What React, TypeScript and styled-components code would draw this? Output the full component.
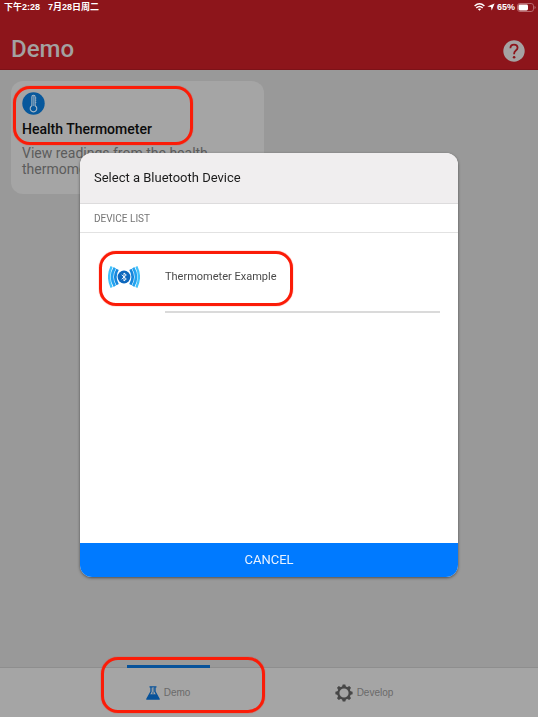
import React from "react";
import styled, { createGlobalStyle } from "styled-components";

const GlobalStyle = createGlobalStyle`
  *, *::before, *::after { box-sizing: border-box; }
  body {
    margin: 0;
    background: #999999;
    font-family: Roboto, "Noto Sans CJK SC", sans-serif;
  }
  button { font: inherit; border: 0; padding: 0; background: none; cursor: pointer; }
  h1, h2, h3, p, ul { margin: 0; padding: 0; }
  svg { display: block; flex: none; }
`;

const Page = styled.div`
  display: flex;
  flex-direction: column;
  min-height: 100vh;
`;

const Header = styled.header`
  display: flex;
  flex-direction: column;
  background: #8d151b;
  border-bottom: 1px solid #7d1218;
`;

const StatusBar = styled.div`
  display: flex;
  justify-content: space-between;
  height: 14px;
  padding: 0 2px 0 4px;
  color: #ffffff;
  font: 700 9px/14px "Liberation Sans", "Noto Sans CJK SC", sans-serif;
`;

const StatusGroup = styled.div<{ $gap: number }>`
  display: flex;
  align-items: center;
  gap: ${(p) => p.$gap}px;
`;

const TitleRow = styled.div`
  display: flex;
  align-items: center;
  justify-content: space-between;
  height: 55px;
  padding: 14px 13px 0 11px;
`;

const Title = styled.h1`
  color: #a3a1a1;
  font-size: 24px;
  font-weight: 500;
  line-height: 28px;
`;

const HelpButton = styled.button`
  margin-top: 4px;
`;

const Content = styled.main`
  flex: 1;
  padding: 11px;
`;

const Card = styled.section`
  position: relative;
  width: 49%;
  min-width: 252px;
  padding: 11px;
  border-radius: 12px;
  background: #a5a5a5;
`;

const CardTitle = styled.h2`
  margin-top: 5px;
  color: #0b0b0b;
  font-size: 14px;
  font-weight: 500;
  line-height: 18px;
`;

const CardText = styled.p`
  margin-top: 7px;
  padding-bottom: 6px;
  color: #5c5c5c;
  font-size: 14px;
  line-height: 16px;
`;

const Highlight = styled.span<{ $inset: string }>`
  position: absolute;
  inset: ${(p) => p.$inset};
  border: 3px solid #fb1c08;
  border-radius: 17px;
  box-shadow: 0 0 1px #fb1c08;
  pointer-events: none;
`;

const TabBar = styled.nav`
  display: flex;
  height: 50px;
  padding: 0 76px 0 70px;
  background: #a5a5a5;
  border-top: 1px solid #8e8e8e;
`;

const Tab = styled.button<{ $active?: boolean }>`
  position: relative;
  display: flex;
  flex: 1;
  align-items: center;
  justify-content: center;
  gap: 4px;
  color: #6a6a6a;
  font-family: "Liberation Sans", sans-serif;
  font-size: 10px;
  line-height: 12px;

  &::before {
    content: "";
    position: absolute;
    top: -3px;
    left: calc(50% - 41px);
    width: 83px;
    height: 3px;
    background: ${(p) => (p.$active ? "#07529a" : "transparent")};
  }
`;

const Backdrop = styled.div`
  position: fixed;
  inset: 0;
  display: flex;
  align-items: center;
  justify-content: center;
  padding: 13px 80px 0;
`;

const Dialog = styled.div`
  display: flex;
  flex-direction: column;
  width: 100%;
  height: 60%;
  min-height: 424px;
  overflow: hidden;
  border-radius: 12px;
  background: #ffffff;
  box-shadow: 0 1px 3px rgba(0, 0, 0, 0.5);
`;

const DialogTitle = styled.h2`
  padding: 16px 14px;
  border-bottom: 1px solid #dddcdd;
  background: #f0eeef;
  color: #1c1c1c;
  font-size: 13px;
  font-weight: 400;
  line-height: 18px;
`;

const ListHeading = styled.h3`
  padding: 7px 14px 5px;
  border-bottom: 1px solid #e2e2e2;
  color: #757575;
  font-size: 10px;
  font-weight: 400;
  line-height: 16px;
`;

const DeviceList = styled.ul`
  flex: 1;
  padding: 9px 18px 0 28px;
  list-style: none;
`;

const DeviceButton = styled.button`
  position: relative;
  display: flex;
  align-items: stretch;
  gap: 25px;
  width: 100%;
  text-align: left;
`;

const DeviceIcon = styled.span`
  padding-top: 23px;
`;

const DeviceName = styled.span`
  flex: 1;
  height: 71px;
  padding-top: 27px;
  border-bottom: 2px solid #dadada;
  color: #4a4a4a;
  font-size: 11px;
  line-height: 16px;
`;

const CancelButton = styled.button`
  height: 34px;
  background: #007aff;
  color: #e9f2ff;
  font-size: 13px;
  line-height: 34px;
`;

const WifiIcon = () => (
  <svg width="11" height="8" viewBox="0 0 11 8" fill="none" stroke="#fff" strokeWidth="1.5">
    <path d="M.6 3Q5.5-1.4 10.4 3M2.3 4.9q3.2-2.7 6.4 0" />
    <path d="M5.5 7.8 3.8 6.1q1.7-1.3 3.4 0z" fill="#fff" stroke="none" />
  </svg>
);

const LocationIcon = () => (
  <svg width="8" height="8" viewBox="0 0 8 8" fill="#fff">
    <path d="M7.6.4 4.7 7.6 4 4 .3 3.4z" />
  </svg>
);

const BatteryIcon = () => (
  <svg width="19" height="9" viewBox="0 0 19 9">
    <rect x=".5" y=".5" width="16" height="8" rx="2.4" fill="none" stroke="#b9686d" />
    <rect x="1.5" y="1.5" width="9.5" height="6" rx="1.4" fill="#fff" />
    <path d="M17.5 3q1.2.3 1.2 1.5T17.5 6z" fill="#b9686d" />
  </svg>
);

const HelpIcon = () => (
  <svg width="22" height="22" viewBox="0 0 22 22">
    <circle cx="11" cy="11" r="10.7" fill="#a5a3a3" />
    <path d="M7.4 8.2q.1-3.6 3.6-3.6t3.6 3.1q0 1.5-2 3-1.5 1.1-1.5 3.2v.4" fill="none" stroke="#8d151b" strokeWidth="1.8" />
    <circle cx="11.1" cy="17.2" r="1.3" fill="#8d151b" />
  </svg>
);

const ThermometerIcon = () => (
  <svg width="23" height="23" viewBox="0 0 23 23" fill="none" stroke="#a9b9c6">
    <circle cx="11.5" cy="11.5" r="11.2" fill="#07589c" stroke="none" />
    <path d="M9.9 13.7V5q0-1.7 1.6-1.7T13.1 5v8.7a3.3 3.3 0 1 1-3.2 0z" strokeWidth="1.1" />
    <path d="M11.5 4v10" strokeWidth="1" strokeOpacity=".6" />
    <path d="M13 6h1.4M13 8.2h1.4M13 10.4h1.4" strokeWidth=".7" />
    <circle cx="11.5" cy="16.6" r="1.6" fill="#07589c" stroke="none" />
  </svg>
);

const BluetoothIcon = () => (
  <svg width="32" height="24" viewBox="0 0 32 24" fill="none" strokeWidth="2.7">
    <circle cx="16" cy="12" r="6.4" fill="#0d67bd" />
    <path d="m13.7 9.8 4.6 4.2-2.3 2V8l2.3 2-4.6 4.2" stroke="#fff" strokeWidth=".9" />
    <path d="M9.6 4.4q-4.6 7.6 0 15.2M22.4 4.4q4.6 7.6 0 15.2" stroke="#1687dc" />
    <path d="M6.8 2.8q-5.6 9.2 0 18.4M25.2 2.8q5.6 9.2 0 18.4" stroke="#23a2ef" />
    <path d="M3.6 1.6q-5 10.4 0 20.8M28.4 1.6q5 10.4 0 20.8" stroke="#42c2fb" strokeWidth="2.3" />
  </svg>
);

const FlaskIcon = () => (
  <svg width="14" height="14" viewBox="0 0 14 14" fill="none" stroke="#07529a">
    <path d="M3.5.8h7M5 1v4.6L1 12.9h12L9 5.6V1" strokeWidth="1.3" />
    <path d="M3.5 8.2h7l2.9 5.3H.6z" fill="#07529a" stroke="none" />
    <path d="M6.7 3h2M6.7 5h2M6 7h2" strokeWidth=".9" />
  </svg>
);

const GearIcon = () => (
  <svg width="18" height="18" viewBox="0 0 18 18" fill="none" stroke="#474747">
    <circle cx="9" cy="9" r="5.7" strokeWidth="2.2" />
    {[0, 45, 90, 135, 180, 225, 270, 315].map((angle) => (
      <path key={angle} d="M7 3.1 7.7.4h2.6l.7 2.7z" fill="#474747" stroke="none" transform={`rotate(${angle} 9 9)`} />
    ))}
  </svg>
);

export default function App() {
  return (
    <>
      <GlobalStyle />
      <Page>
        <Header>
          <StatusBar>
            <StatusGroup $gap={8}>
              <span>下午2:28</span>
              <span>7月28日周二</span>
            </StatusGroup>
            <StatusGroup $gap={2}>
              <WifiIcon />
              <LocationIcon />
              <span>65%</span>
              <BatteryIcon />
            </StatusGroup>
          </StatusBar>
          <TitleRow>
            <Title>Demo</Title>
            <HelpButton aria-label="Help">
              <HelpIcon />
            </HelpButton>
          </TitleRow>
        </Header>
        <Content>
          <Card>
            <ThermometerIcon />
            <CardTitle>Health Thermometer</CardTitle>
            <CardText>View readings from the health thermometer</CardText>
            <Highlight $inset="5px 71px 49px 2px" />
          </Card>
        </Content>
        <TabBar>
          <Tab $active aria-current="page">
            <FlaskIcon />
            Demo
            <Highlight $inset="-11px 1px 4px 31px" />
          </Tab>
          <Tab>
            <GearIcon />
            Develop
          </Tab>
        </TabBar>
      </Page>
      <Backdrop>
        <Dialog role="dialog" aria-modal="true" aria-labelledby="dialog-title">
          <DialogTitle id="dialog-title">Select a Bluetooth Device</DialogTitle>
          <ListHeading>DEVICE LIST</ListHeading>
          <DeviceList>
            <li>
              <DeviceButton>
                <DeviceIcon>
                  <BluetoothIcon />
                </DeviceIcon>
                <DeviceName>Thermometer Example</DeviceName>
                <Highlight $inset="9px 147px 7px -9px" />
              </DeviceButton>
            </li>
          </DeviceList>
          <CancelButton>CANCEL</CancelButton>
        </Dialog>
      </Backdrop>
    </>
  );
}
